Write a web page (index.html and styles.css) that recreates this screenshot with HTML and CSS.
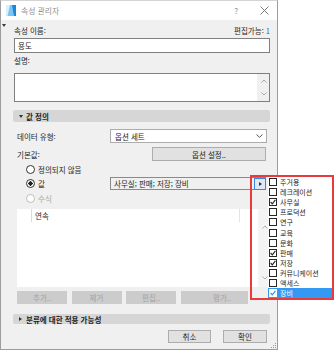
FILE: index.html
```html
<!DOCTYPE html>
<html lang="ko">
<head>
    <meta charset="UTF-8">
    <meta name="viewport" content="width=device-width, initial-scale=1.0">
    <title>속성 관리자</title>
    <link rel="stylesheet" href="styles.css">
</head>
<body>
<div class="screen">
    <div class="dialog">
        <!-- 타이틀 바 -->
        <div class="titlebar">
            <svg class="app-icon" width="10" height="11" viewBox="0 0 10 11">
                <rect x="0" y="0" width="10" height="11" fill="#7cc6f4"/>
                <polygon points="0,0 4,0 1.5,11 0,11" fill="#d9f0fc"/>
                <polygon points="6,0 10,0 10,11 8,11" fill="#1f86d6"/>
            </svg>
            <span class="title">속성 관리자</span>
            <span class="help">?</span>
            <svg class="close" width="9" height="9" viewBox="0 0 9 9">
                <path d="M0.5 0.5 L8.5 8.5 M8.5 0.5 L0.5 8.5" stroke="#6f6f6f" stroke-width="0.9"/>
            </svg>
        </div>

        <div class="content">
            <span class="corner-mark"></span>

            <div class="name-row">
                <span>속성 이름:</span>
                <span class="editable">편집가능: <span class="count">1</span></span>
            </div>
            <div class="textbox">용도</div>

            <div class="label-row">설명:</div>
            <div class="memo">
                <div class="memo-text"></div>
                <div class="scrollbar">
                    <svg width="6" height="4" viewBox="0 0 6 4"><path d="M0.5 3.5 L3 1 L5.5 3.5" fill="none" stroke="#a8a8a8"/></svg>
                    <svg width="6" height="4" viewBox="0 0 6 4"><path d="M0.5 0.5 L3 3 L5.5 0.5" fill="none" stroke="#a8a8a8"/></svg>
                </div>
            </div>

            <!-- 값 정의 -->
            <div class="section"><span class="tri-down"></span>값 정의</div>

            <div class="field-row type-row">
                <span class="field-label">데이터 유형:</span>
                <div class="select">
                    <span>옵션 세트</span>
                    <svg width="7" height="4" viewBox="0 0 7 4"><path d="M0.5 0.5 L3.5 3.3 L6.5 0.5" fill="none" stroke="#555"/></svg>
                </div>
            </div>

            <div class="field-row default-row">
                <span class="field-label">기본값:</span>
                <button class="btn options-btn">옵션 설정..</button>
            </div>

            <div class="radio-row">
                <span class="radio"></span>정의되지 않음
            </div>
            <div class="radio-row value-row">
                <span class="radio checked"></span>값
                <div class="value-field">
                    <span>사무실; 판매; 저장; 장비</span>
                    <span class="expand-btn"></span>
                </div>
            </div>
            <div class="radio-row disabled">
                <span class="radio"></span>수식
            </div>

            <div class="list">
                <div class="list-main">
                    <div class="list-head">
                        <span class="col-a"></span>
                        <span class="col-b">연속</span>
                    </div>
                </div>
                <div class="scrollbar list-scroll">
                    <svg width="6" height="4" viewBox="0 0 6 4"><path d="M0.5 3.5 L3 1 L5.5 3.5" fill="none" stroke="#b0b0b0"/></svg>
                    <svg width="6" height="4" viewBox="0 0 6 4"><path d="M0.5 0.5 L3 3 L5.5 0.5" fill="none" stroke="#b0b0b0"/></svg>
                </div>
            </div>

            <div class="list-buttons">
                <button class="btn flat">추가..</button>
                <button class="btn flat">제거</button>
                <button class="btn flat">편집..</button>
                <button class="btn flat wide">평가..</button>
            </div>

            <div class="section closed"><span class="tri-right"></span>분류에 대한 적용 가능성</div>

            <div class="footer">
                <button class="btn cancel">취소</button>
                <button class="btn ok">확인</button>
            </div>

            <svg class="grip" width="7" height="7" viewBox="0 0 7 7">
                <rect x="5" y="1" width="1" height="1" fill="#9a9a9a"/>
                <rect x="3" y="3" width="1" height="1" fill="#9a9a9a"/>
                <rect x="5" y="3" width="1" height="1" fill="#9a9a9a"/>
                <rect x="1" y="5" width="1" height="1" fill="#9a9a9a"/>
                <rect x="3" y="5" width="1" height="1" fill="#9a9a9a"/>
                <rect x="5" y="5" width="1" height="1" fill="#9a9a9a"/>
            </svg>
        </div>
    </div>

    <!-- 옵션 선택 팝업 -->
    <div class="popup">
        <ul class="checklist">
            <li><span class="check"></span>주거용</li>
            <li><span class="check"></span>레크레이션</li>
            <li><span class="check on"><svg width="6" height="6" viewBox="0 0 6 6"><path d="M0.6 3 L2.3 4.8 L5.4 0.8" fill="none" stroke="#222" stroke-width="1.1"/></svg></span>사무실</li>
            <li><span class="check"></span>프로덕션</li>
            <li><span class="check"></span>연구</li>
            <li><span class="check"></span>교육</li>
            <li><span class="check"></span>문화</li>
            <li><span class="check on"><svg width="6" height="6" viewBox="0 0 6 6"><path d="M0.6 3 L2.3 4.8 L5.4 0.8" fill="none" stroke="#222" stroke-width="1.1"/></svg></span>판매</li>
            <li><span class="check on"><svg width="6" height="6" viewBox="0 0 6 6"><path d="M0.6 3 L2.3 4.8 L5.4 0.8" fill="none" stroke="#222" stroke-width="1.1"/></svg></span>저장</li>
            <li><span class="check"></span>커뮤니케이션</li>
            <li><span class="check"></span>액세스</li>
            <li class="selected"><span class="check on"><svg width="6" height="6" viewBox="0 0 6 6"><path d="M0.6 3 L2.3 4.8 L5.4 0.8" fill="none" stroke="#2f8ee8" stroke-width="1.1"/></svg></span>장비</li>
        </ul>
    </div>
</div>
</body>
</html>
```

FILE: styles.css
```css
* {
    box-sizing: border-box;
}

body {
    margin: 0;
    background: #ffffff;
    font-family: "Noto Sans CJK KR", "Noto Sans", sans-serif;
    font-size: 7.5px;
    color: #1e1e1e;
}

.screen {
    position: relative;
    width: 335px;
    height: 350px;
    overflow: hidden;
}

/* 대화상자 */
.dialog {
    position: relative;
    width: 278px;
    height: 350px;
    background: #f0f0f0;
    border: 1px solid #9c9c9c;
    border-top-color: #d4d4d4;
}

.titlebar {
    display: flex;
    align-items: center;
    height: 19px;
    padding: 0 8px 0 5px;
    background: #ffffff;
}

.app-icon {
    margin-right: 5px;
}

.title {
    flex: 1;
    color: #8f8f8f;
    font-size: 7.8px;
}

.help {
    color: #8f8f8f;
    font-size: 8px;
    margin-right: 22px;
}

.content {
    position: relative;
    height: 329px;
    padding: 5px 7px 0 13px;
}

.corner-mark {
    position: absolute;
    left: 1px;
    top: 4px;
    border-left: 2.5px solid transparent;
    border-right: 2.5px solid transparent;
    border-top: 3px solid #3a3a3a;
}

.name-row {
    display: flex;
    justify-content: space-between;
    height: 12px;
    line-height: 12px;
}

.editable .count {
    color: #2a63c4;
}

.textbox {
    margin-top: 1px;
    height: 15px;
    line-height: 13px;
    padding-left: 3px;
    background: #fff;
    border: 1px solid #7f7f7f;
}

.label-row {
    margin-top: 2px;
    height: 12px;
    line-height: 12px;
}

.memo {
    display: flex;
    margin-top: 6px;
    height: 29px;
    background: #fff;
    border: 1px solid #7f7f7f;
}

.memo-text {
    flex: 1;
}

.scrollbar {
    display: flex;
    flex-direction: column;
    justify-content: space-between;
    align-items: center;
    width: 12px;
    padding: 5px 0 5px 1px;
    background: #f0f0f0;
}

/* 섹션 헤더 */
.section {
    display: flex;
    align-items: center;
    margin: 8px 0 0 -1px;
    height: 12px;
    padding-left: 6px;
    background: #d6d6d6;
    border-radius: 2px;
    font-weight: bold;
    color: #222;
}

.tri-down {
    border-left: 2.5px solid transparent;
    border-right: 2.5px solid transparent;
    border-top: 3px solid #333;
    margin-right: 3px;
}

.tri-right {
    border-top: 2.5px solid transparent;
    border-bottom: 2.5px solid transparent;
    border-left: 3px solid #333;
    margin-right: 4px;
}

.section.closed {
    margin-top: 10px;
    height: 10px;
}

.field-row {
    display: flex;
    align-items: center;
    padding-left: 3px;
}

.type-row {
    margin-top: 7px;
    height: 14px;
}

.field-label {
    width: 93px;
}

.select {
    display: flex;
    align-items: center;
    justify-content: space-between;
    width: 157px;
    height: 14px;
    padding: 0 3px 0 4px;
    background: #fff;
    border: 1px solid #acacac;
}

.default-row {
    margin-top: 4px;
    height: 14px;
}

.btn {
    padding: 0;
    font-family: inherit;
    font-size: inherit;
    color: #1e1e1e;
    background: #e1e1e1;
    border: 1px solid #adadad;
}

.options-btn {
    margin-left: auto;
    margin-right: 4px;
    width: 114px;
    height: 14px;
}

/* 라디오 */
.radio-row {
    display: flex;
    align-items: center;
    margin-top: 2px;
    height: 12px;
    padding-left: 12px;
}

.radio {
    width: 9px;
    height: 9px;
    margin-right: 3px;
    border: 1px solid #333;
    border-radius: 50%;
    background: #fff;
}

.radio.checked {
    background: radial-gradient(circle, #222 0 2px, #fff 2.3px);
}

.radio-row.disabled {
    color: #a8a8a8;
}

.radio-row.disabled .radio {
    border-color: #bcbcbc;
}

.value-row {
    height: 13px;
}

.value-field {
    display: flex;
    align-items: center;
    justify-content: space-between;
    margin-left: auto;
    margin-right: 4px;
    width: 156px;
    height: 13px;
    padding-left: 3px;
    background: #f0f0f0;
    border: 1px solid #8a8a8a;
}

.expand-btn {
    position: relative;
    width: 12px;
    height: 12px;
    margin-right: -1px;
    background: #dfe9f5;
    border: 1px solid #3f86dc;
}

.expand-btn::after {
    content: "";
    position: absolute;
    left: 4px;
    top: 3px;
    border-top: 2.5px solid transparent;
    border-bottom: 2.5px solid transparent;
    border-left: 3px solid #333;
}

/* 목록 */
.list {
    display: flex;
    margin: 5px 0 0 3px;
    height: 78px;
    background: #fff;
}

.list-main {
    flex: 1;
}

.list-head {
    display: flex;
    height: 13px;
    line-height: 13px;
}

.col-a {
    width: 15px;
    border-right: 1px solid #dadada;
}

.col-b {
    width: 208px;
    padding-left: 3px;
    border-right: 1px solid #e4e4e4;
}

.list-scroll {
    padding: 16px 0 7px 1px;
    background: #f4f4f4;
}

.list-buttons {
    display: flex;
    gap: 4.5px;
    margin-top: 4px;
    padding-left: 3px;
    height: 13px;
}

.btn.flat {
    width: 50px;
    color: #a3a3a3;
    background: #cccccc;
    border-color: #cccccc;
}

.btn.flat.wide {
    width: 67px;
    padding-left: 16px;
}

.footer {
    display: flex;
    justify-content: flex-end;
    gap: 12px;
    margin-top: 6px;
    padding-right: 3px;
    height: 13px;
}

.cancel {
    width: 43px;
}

.ok {
    width: 44px;
}

.grip {
    position: absolute;
    right: 0;
    bottom: 0;
}

/* 팝업 체크리스트 */
.popup {
    position: absolute;
    left: 250px;
    top: 175px;
    width: 84px;
    height: 125px;
    border: 2px solid #e83b3d;
}

.checklist {
    list-style: none;
    margin: 0 0 0 16px;
    padding: 0;
    height: 100%;
    background: #fff;
    font-size: 7px;
}

.checklist li {
    display: flex;
    align-items: center;
    height: 10.1px;
    padding-left: 1px;
}

.check {
    display: flex;
    align-items: center;
    justify-content: center;
    width: 8px;
    height: 8px;
    margin-right: 3px;
    background: #fff;
    border: 1px solid #262626;
}

.checklist li.selected {
    color: #fff;
    background: #3399f3;
}

.checklist li.selected .check {
    border-color: #fff;
}
```
